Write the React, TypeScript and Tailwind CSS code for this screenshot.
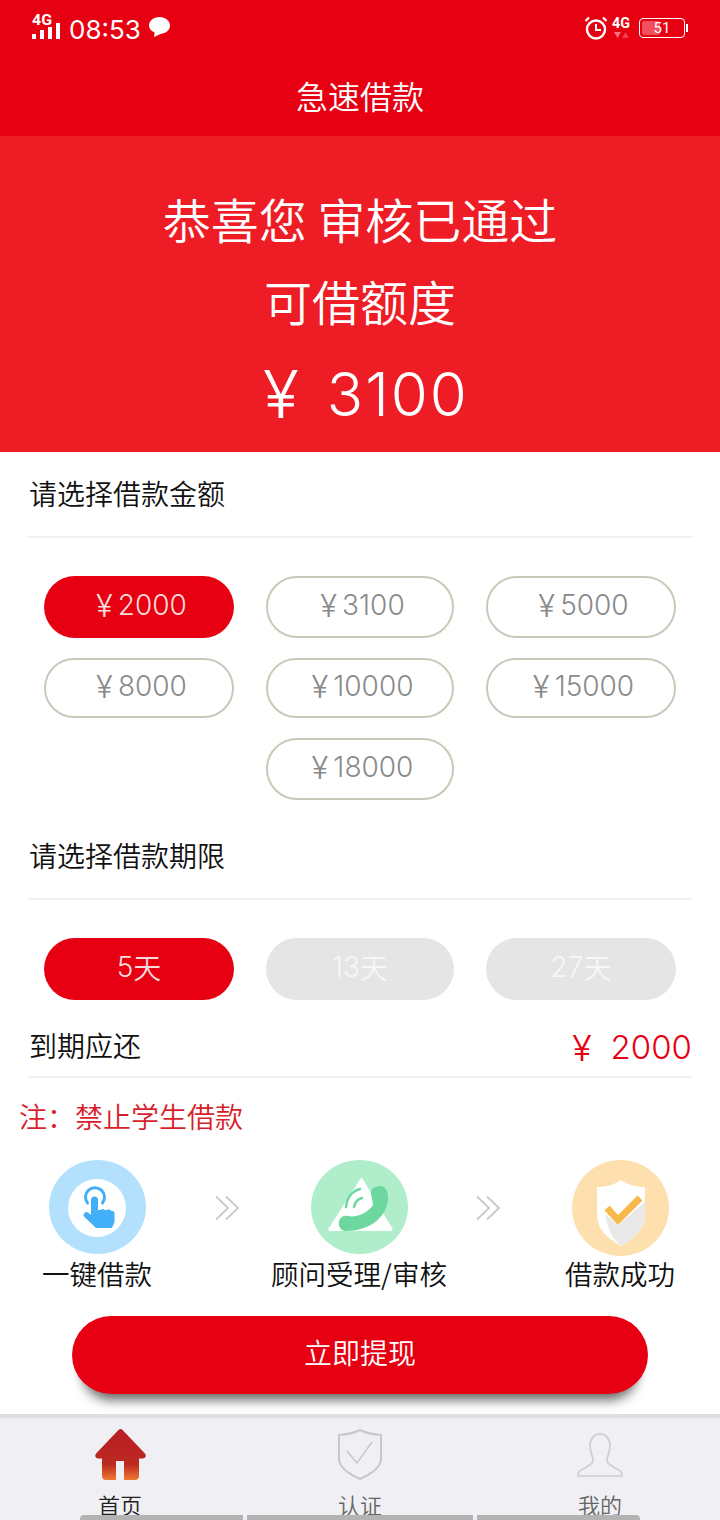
import React from 'react';

const cjk = { fontFamily: '"Noto Sans CJK SC", sans-serif' };

const amounts = [
  { label: '2000', active: true, h: 'h-[62px]' },
  { label: '3100', active: false, h: 'h-[62px]' },
  { label: '5000', active: false, h: 'h-[62px]' },
  { label: '8000', active: false, h: 'h-[60px]' },
  { label: '10000', active: false, h: 'h-[60px]' },
  { label: '15000', active: false, h: 'h-[60px]' },
];

const SignalIcon = () => (
  <svg width="29" height="34" viewBox="0 0 29 34" fill="#fff">
    <text x="0" y="14" fontSize="14" fontWeight="700" fontFamily="Roboto, sans-serif" textLength="20" lengthAdjust="spacingAndGlyphs">4G</text>
    <rect x="0" y="23" width="4" height="5" />
    <rect x="8" y="19" width="4" height="9" />
    <rect x="16" y="16" width="4" height="12" />
    <rect x="24" y="12" width="4" height="16" />
  </svg>
);

const BubbleIcon = () => (
  <svg width="21" height="20" viewBox="0 0 21 20" fill="#fff">
    <path d="M10.5 0C16.3 0 21 3.8 21 8.6c0 4.6-4 8-9.5 8.4L5 20l.6-4.4C2.2 14.2 0 11.700 0 8.600 0 3.800 4.700 0 10.500 0z" />
  </svg>
);

const AlarmIcon = () => (
  <svg width="24" height="24" viewBox="0 0 24 24" fill="none" stroke="#fff">
    <circle cx="12" cy="13.500" r="9" strokeWidth="2.400" />
    <path d="M12 8v6h5" strokeWidth="2" />
    <path d="M1.500 5 5 1.500M22.500 5 19 1.500" strokeWidth="2.200" />
  </svg>
);

const NetIcon = () => (
  <svg width="20" height="30" viewBox="0 0 20 30">
    <text x="1" y="15" fontSize="14" fontWeight="700" fill="#fff" fontFamily="Roboto, sans-serif" textLength="18" lengthAdjust="spacingAndGlyphs">4G</text>
    <path d="M3 19h7l-3.500 6z" fill="#f4707a" />
    <path d="M11 25h7l-3.500-6z" fill="#f0404c" />
  </svg>
);

const Chevrons = () => (
  <svg width="26" height="26" viewBox="0 0 26 26" fill="none" stroke="#c9c9c9" strokeWidth="1.800">
    <path d="M1 1.500 13 13 1 24.500M11 1.500 23 13 11 24.500" />
  </svg>
);

const TapBadge = () => (
  <svg width="97" height="94" viewBox="0 0 97 94">
    <ellipse cx="48.500" cy="47" rx="48.500" ry="47" fill="#b3e1fd" />
    <circle cx="48" cy="48" r="29" fill="#fff" />
    <path d="M38.500 43a9.500 9.500 0 1 1 15 0" fill="none" stroke="#41b0f8" strokeWidth="3" strokeLinecap="round" />
    <path
      d="M42 40a3.500 3.500 0 0 1 7 0v10h3a2 2 0 0 1 3.500 0h2.500a2 2 0 0 1 3.500 .5l2 .5a2 2 0 0 1 2 2V62l-2.500 6H47L35.500 57a2.800 2.800 0 0 1 4-4l2.500 2z"
      fill="#41b0f8"
    />
  </svg>
);

const PhoneBadge = () => (
  <svg width="97" height="94" viewBox="0 0 97 94">
    <ellipse cx="48.500" cy="47" rx="48.500" ry="47" fill="#b0eecb" />
    <path d="M50.500 19 80 68a1 1 0 0 1-1 2H20a1 1 0 0 1-1-2z" fill="#fff" stroke="#fff" strokeWidth="2" strokeLinejoin="round" />
    <path
      d="M60 33C60 28 65 26 69 26C75 26 77 32 77 38C77 54 62 71 35 71C29 71 27 65 28 61C29 57 33 55 37 56C46 58 58 52 62 45C62 41 60 37 60 33Z"
      fill="#6cd8a0"
    />
    <path d="M49 29C41 31 36 38 35 47M51 38c-4 1-7 4-8 9" fill="none" stroke="#6cd8a0" strokeWidth="2.500" strokeLinecap="round" />
  </svg>
);

const ShieldBadge = () => (
  <svg width="97" height="96" viewBox="0 0 97 96">
    <ellipse cx="48.500" cy="48" rx="48.500" ry="48" fill="#fedfae" />
    <path d="M49 20c7 5 16 7 24 7v28c0 15-13 25-24 31-11-6-24-16-24-31V27c8 0 17-2 24-7z" fill="#fff" />
    <path d="M33 54l13 11 27-23v13c0 15-13 25-24 31-8-6-13-16-16-32z" fill="#e9e9e9" />
    <path d="M35 48l11 12 22-22" fill="none" stroke="#f6b94a" strokeWidth="7" />
  </svg>
);

const HomeIcon = () => (
  <svg width="51" height="51" viewBox="0 0 51 51">
    <defs>
      <linearGradient id="homeFill" x1="0" y1="0" x2="0" y2="1">
        <stop offset="0" stopColor="#b81c24" />
        <stop offset="0.7" stopColor="#bd2a22" />
        <stop offset="1" stopColor="#ee7a30" />
      </linearGradient>
    </defs>
    <path
      d="M25.500 0c1 0 2 .8 3 2l21 22c2.500 2.800 1 5.500-2 5.500H44V47c0 2.500-1.500 4-4 4H29V32h-8v19H11c-2.500 0-4-1.500-4-4V29.500H3.500c-3 0-4.500-2.700-2-5.500l21-22c1-1.200 2-2 3-2z"
      fill="url(#homeFill)"
    />
  </svg>
);

const ShieldTabIcon = () => (
  <svg width="44" height="51" viewBox="0 0 44 51" fill="none" stroke="#c8c8cb" strokeWidth="2">
    <path d="M22 1c6 3 13 4.500 21 5v24c0 8-10 15-21 20C11 45 1 38 1 30V6c8-.5 15-2 21-5z" />
    <path d="M9 22l10 12 15-21" strokeWidth="1.500" />
  </svg>
);

const PersonTabIcon = () => (
  <svg width="46" height="44" viewBox="0 0 46 44" fill="none" stroke="#cdcdd0" strokeWidth="1.600">
    <path d="M23 1c6 0 10 5 10 12 0 6-3 10-3 14 0 5 7 7 12 10 2 1 3 3 3 6H1c0-3 1-5 3-6 5-3 12-5 12-10 0-4-3-8-3-14C13 6 17 1 23 1z" />
  </svg>
);

export default function App() {
  return (
    <div className="relative h-[1520px] w-[720px] overflow-hidden bg-white" style={cjk}>
      {/* Header */}
      <div className="h-[136px] bg-[#e60012] text-white">
        <div className="flex h-[56px] items-center justify-between pl-[32px] pr-[35px]">
          <div className="flex items-center">
            <SignalIcon />
            <span className="ml-[8px] mt-[3px] font-['Inter'] text-[26px] leading-none">08:53</span>
            <span className="mb-[3px] ml-[8px]"><BubbleIcon /></span>
          </div>
          <div className="flex items-center">
            <AlarmIcon />
            <span className="ml-[3px]"><NetIcon /></span>
            <div className="relative ml-[8px] h-[20px] w-[46px] rounded-[4px] border border-white p-[2px] after:absolute after:right-[-4px] after:top-[5px] after:h-[8px] after:w-[2px] after:bg-white">
              <div className="h-full w-[18px] rounded-[2px] bg-[#f0505c]" />
              <span className="absolute inset-0 text-center font-['Roboto'] text-[15px] leading-[18px]">51</span>
            </div>
          </div>
        </div>
        <div className="flex h-[78px] items-center justify-center text-[32px] font-[350]">急速借款</div>
      </div>

      {/* Hero */}
      <div className="flex h-[316px] flex-col items-center bg-[#ee1c25] pt-[50px] font-[350] text-white">
        <div className="text-[48px] leading-[64px]">恭喜您 审核已通过</div>
        <div className="mt-[18px] text-[48px] leading-[64px]">可借额度</div>
        <div className="mt-[26px] flex items-center pl-[12px] font-['Inter'] text-[60px] font-light leading-[72px]">
          <span className="text-[66px]">¥</span>
          <span className="ml-[28px] tracking-[2px]">3100</span>
        </div>
      </div>

      {/* Amount */}
      <div className="mx-[28px] flex h-[86px] items-center border-b-2 border-[#f0f0f0] pb-[2px] pl-[1px] text-[28px] font-[350] text-[#111]">请选择借款金额</div>
      <div className="grid grid-cols-[190px_188px_190px] gap-x-[32px] gap-y-[20px] pl-[44px] pt-[38px]">
        {amounts.map((a) => (
          <div
            key={a.label}
            className={`flex items-center justify-center rounded-full pb-[4px] pl-[5px] font-['Inter'] text-[28px] font-light ${a.h} ${
              a.active ? 'bg-[#e60012] text-[#f8dcdc]' : 'border-2 border-[#cbc8ba] text-[#8a8a8a]'
            }`}
          >
            <span className="mr-[5px] text-[31px] leading-none">¥</span>
            {a.label}
          </div>
        ))}
        <div className="col-start-2 flex h-[62px] items-center justify-center rounded-full border-2 border-[#cbc8ba] pb-[4px] pl-[5px] font-['Inter'] text-[28px] font-light text-[#8a8a8a]">
          <span className="mr-[5px] text-[31px] leading-none">¥</span>
          18000
        </div>
      </div>

      {/* Period */}
      <div className="mx-[28px] mt-[14px] flex h-[86px] items-center border-b-2 border-[#f0f0f0] pb-[2px] pl-[1px] text-[28px] font-[350] text-[#111]">请选择借款期限</div>
      <div className="grid grid-cols-[190px_188px_190px] gap-x-[32px] pl-[44px] pt-[38px]">
        <div className="flex h-[62px] items-center justify-center rounded-full bg-[#e60012] pb-[4px] text-[28px] font-[350] text-[#f8dcdc]">
          <span className="font-['Inter'] font-light">5</span>天
        </div>
        <div className="flex h-[62px] items-center justify-center rounded-full bg-[#e5e5e5] pb-[4px] text-[28px] font-[350] text-[#f7f7f7]">
          <span className="font-['Inter'] font-light">13</span>天
        </div>
        <div className="flex h-[62px] items-center justify-center rounded-full bg-[#e5e5e5] pb-[4px] text-[28px] font-[350] text-[#f7f7f7]">
          <span className="font-['Inter'] font-light">27</span>天
        </div>
      </div>

      {/* Due */}
      <div className="mx-[28px] flex h-[78px] items-center justify-between border-b-2 border-[#f0f0f0] pl-[1px] pt-[14px]">
        <span className="text-[28px] font-[350] text-[#111]">到期应还</span>
        <span className="mt-[6px] flex items-center font-['Inter'] text-[33px] font-light text-[#e60012]">
          <span className="text-[36px]">¥</span>
          <span className="ml-[19px]">2000</span>
        </span>
      </div>
      <div className="flex h-[82px] items-center pb-[6px] pl-[19px] text-[28px] font-[350] text-[#d81e2c]">注：禁止学生借款</div>

      {/* Steps */}
      <div className="grid grid-cols-[194px_68px_194px_66px_196px]">
        <div className="flex flex-col items-center">
          <TapBadge />
          <span className="mt-[1px] whitespace-nowrap text-[27.5px] font-[350] leading-[36px] text-[#111]">一键借款</span>
        </div>
        <div className="flex justify-center pt-[35px]"><Chevrons /></div>
        <div className="flex flex-col items-center">
          <PhoneBadge />
          <span className="mt-[1px] whitespace-nowrap text-[27.5px] font-[350] leading-[36px] text-[#111]">顾问受理/审核</span>
        </div>
        <div className="flex justify-center pt-[35px]"><Chevrons /></div>
        <div className="flex flex-col items-center">
          <ShieldBadge />
          <span className="mt-[-1px] whitespace-nowrap text-[27.5px] font-[350] leading-[36px] text-[#111]">借款成功</span>
        </div>
      </div>

      {/* Submit */}
      <div className="mx-[72px] mt-[25px] flex h-[78px] items-center justify-center rounded-full bg-[#e60012] pb-[6px] text-[28px] font-[350] text-white shadow-[0_16px_12px_-10px_rgba(0,0,0,0.6)]">
        立即提现
      </div>

      {/* Tab bar */}
      <div className="mt-[20px] grid h-[106px] grid-cols-3 border-t-4 border-[#dfdfe1] bg-[#efeff4]">
        <div className="flex flex-col items-center pt-[11px]">
          <HomeIcon />
          <span className="mt-[9px] text-[22px] font-[350] leading-[30px] text-[#222]">首页</span>
        </div>
        <div className="flex flex-col items-center pt-[11px]">
          <ShieldTabIcon />
          <span className="mt-[9px] text-[22px] font-[350] leading-[30px] text-[#666]">认证</span>
        </div>
        <div className="flex flex-col items-center pt-[15px]">
          <PersonTabIcon />
          <span className="mt-[12px] text-[22px] font-[350] leading-[30px] text-[#666]">我的</span>
        </div>
      </div>

      {/* Bottom gesture strip */}
      <div className="absolute bottom-0 left-[80px] flex h-[5px] gap-[4px]">
        <div className="w-[163px] rounded-tl-[4px] bg-[#b3b3b3]" />
        <div className="w-[226px] bg-[#b3b3b3]" />
        <div className="w-[163px] rounded-tr-[4px] bg-[#b3b3b3]" />
      </div>
    </div>
  );
}
